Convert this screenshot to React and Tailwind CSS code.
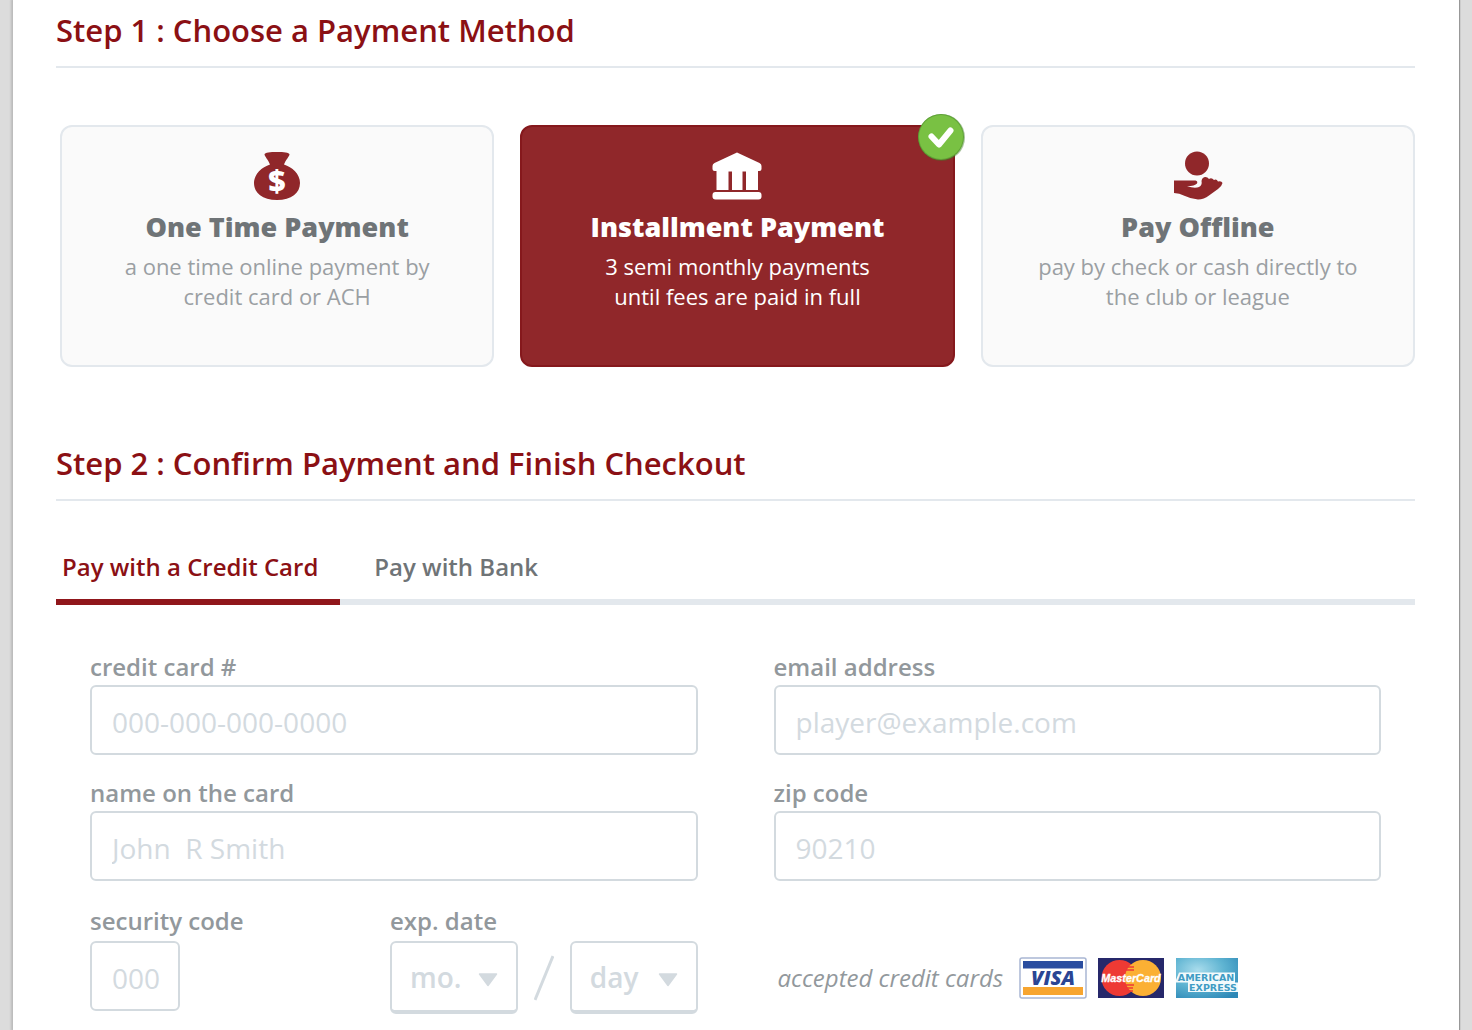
import { useState } from "react";

function MoneyBagIcon() {
  return (
    <svg viewBox="0 0 50 50" className="h-[50px] w-[50px]" aria-hidden="true">
      <path
        d="M12.5 3.2C13 1.6 18 1 25 1s12 .6 12.500 2.200C37.700 5 33.500 9 32 13.500c8 2.500 16 9.500 16 18.500 0 10-8.500 17-23 17S2 42 2 32c0-9 8-16 16-18.500C16.500 9 12.300 5 12.500 3.200Z"
        fill="#90272a"
      />
      <text x="25" y="41" textAnchor="middle" fontSize="30" className="fill-white font-['Open_Sans',sans-serif] font-extrabold">
        $
      </text>
    </svg>
  );
}

function BankIcon() {
  return (
    <svg viewBox="0 0 50 50" className="h-[50px] w-[50px]" fill="#fff" aria-hidden="true">
      <path d="M25 1.500 47.500 12Q49.500 13 49.500 15v3Q49.500 20 47.500 20H46V39H34V20.500H30.500V39H20V20.500H16.500V39H4.500V20H2.500Q.5 20 .5 18V15Q.5 13 2.500 12Z" />
      <rect x="0.500" y="41" width="49" height="7.500" rx="3" />
    </svg>
  );
}

function HandIcon() {
  return (
    <svg viewBox="0 0 50 50" className="h-[50px] w-[50px]" fill="#90272a" aria-hidden="true">
      <circle cx="24" cy="12.500" r="12" />
      <path d="M1 29.500H22.500Q25 30 24 32.500 22 35 14 35.300 22 37.800 26 36 29.500 34 28.500 30 29 26.500 32 26 34.500 25.800 36 28 38.500 26 41 29 43.500 27.500 45 30.500 48.500 29.500 49.500 32 49 35 45 38L36 44.500Q31 48.500 25 48.500 18 48 12 45 6 42 1 42Z" />
    </svg>
  );
}

function CheckBadge() {
  return (
    <svg viewBox="0 0 48 48" className="pointer-events-none absolute -top-3.5 -right-3 h-12 w-12" aria-hidden="true">
      <circle cx="24.500" cy="24.500" r="23.500" fill="#3d7a26" opacity="0.45" />
      <circle cx="24" cy="24" r="23" fill="#5fa336" />
      <circle cx="24" cy="24" r="22" fill="#79c143" />
      <path d="M14.500 23.500 22 31.500 33.500 17.500" fill="none" stroke="#fff" strokeWidth="6" strokeLinejoin="round" strokeLinecap="round" />
    </svg>
  );
}

function VisaLogo() {
  return (
    <svg viewBox="0 0 68 42" className="h-[42px] w-[68px]" role="img" aria-label="Visa">
      <rect x="1" y="1" width="66" height="40" rx="2" fill="#fff" stroke="#a9b6d3" strokeWidth="1.500" />
      <rect x="4" y="4" width="60" height="7.500" fill="#2a4da0" />
      <rect x="4" y="30" width="60" height="8" fill="#f7a530" />
      <text x="34" y="28" textAnchor="middle" fontSize="20" fill="#2a4594" className="font-['Open_Sans',sans-serif] font-extrabold italic">
        VISA
      </text>
    </svg>
  );
}

function MasterCardLogo() {
  return (
    <svg viewBox="0 0 68 42" className="h-[42px] w-[68px]" role="img" aria-label="MasterCard">
      <rect x="1" y="1" width="66" height="40" fill="#26286a" />
      <circle cx="22.500" cy="21" r="18" fill="#ee3a34" />
      <circle cx="46" cy="21" r="18" fill="#fbb034" />
      <path d="M29 10h8M28 13h9M28 28h9M29 31h7M32 34h4" stroke="#ee3a34" strokeWidth="1.500" />
      <g fontSize="10.800" textAnchor="middle" className="font-['Liberation_Sans',sans-serif] font-bold italic">
        <text x="34" y="25" fill="#fff" stroke="#fff" strokeWidth="0.300">MasterCard</text>
      </g>
    </svg>
  );
}

function AmexLogo() {
  return (
    <svg viewBox="0 0 64 42" className="h-[42px] w-16" role="img" aria-label="American Express">
      <defs>
        <radialGradient id="amex" cx="0.350" cy="0.300" r="0.850">
          <stop offset="0" stopColor="#a9dcec" />
          <stop offset="0.500" stopColor="#5fb4d2" />
          <stop offset="1" stopColor="#2c87b6" />
        </radialGradient>
      </defs>
      <rect x="1" y="1" width="62" height="40" fill="url(#amex)" />
      <path d="M4 15.500H60V25.500H63V35H13V25.500H1V23Z" fill="#f2fafc" />
      <g fill="#3f9cc4" fontSize="9.500" textAnchor="middle" className="font-['DejaVu_Sans',sans-serif] font-bold">
        <text x="31" y="24">AMERICAN</text>
        <text x="38" y="33.500">EXPRESS</text>
      </g>
    </svg>
  );
}

const methods = [
  { id: "once", title: "One Time Payment", lines: ["a one time online payment by", "credit card or ACH"], Icon: MoneyBagIcon },
  { id: "installment", title: "Installment Payment", lines: ["3 semi monthly payments", "until fees are paid in full"], Icon: BankIcon },
  { id: "offline", title: "Pay Offline", lines: ["pay by check or cash directly to", "the club or league"], Icon: HandIcon },
];

function StepHeading({ children }) {
  return (
    <h2 className="border-b-2 border-[#e3e8ed] pb-4 text-[31px] leading-10 font-semibold text-[#8b1014]">{children}</h2>
  );
}

function MethodCard({ method, selected, onSelect }) {
  const { title, lines, Icon } = method;
  return (
    <button
      type="button"
      role="radio"
      aria-checked={selected}
      onClick={onSelect}
      className={
        "relative flex flex-col items-center rounded-xl border-2 px-4 pt-6 pb-[54px] text-center " +
        (selected ? "border-[#85181c] bg-[#90272a] text-white" : "border-[#e3e8ed] bg-[#fafafa] text-[#9a9fa3]")
      }
    >
      <Icon />
      <span className={"mt-1.5 text-[27px] leading-10 font-extrabold " + (selected ? "text-white" : "text-[#6f7477]")}>{title}</span>
      <span className="mt-1 text-[22px] leading-[30px]">
        {lines[0]}
        <br />
        {lines[1]}
      </span>
      {selected && <CheckBadge />}
    </button>
  );
}

function Field({ id, label, roomy, ...props }) {
  return (
    <div className="flex flex-col">
      <label htmlFor={id} className={"text-2xl font-semibold text-[#92989c] " + (roomy ? "leading-10" : "leading-9")}>{label}</label>
      <input
        id={id}
        className="h-[70px] w-full rounded-md border-2 border-[#d3dadf] bg-white pr-4 pl-5 pt-1 text-[28px] text-[#6f7477] outline-none placeholder:text-[#d3dadf]"
        {...props}
      />
    </div>
  );
}

function DateSelect({ label, text, count }) {
  return (
    <div className="relative flex-1">
      <select
        aria-label={label}
        defaultValue=""
        className="block h-[73px] w-full appearance-none rounded-md border-2 border-b-4 border-[#d3dadf] bg-white px-[18px] text-[28px] font-semibold text-[#d3dadf] outline-none"
      >
        <option value="">{text}</option>
        {Array.from({ length: count }, (_, i) => (
          <option key={i} value={i + 1}>{i + 1}</option>
        ))}
      </select>
      <svg viewBox="0 0 20 14" className="pointer-events-none absolute top-8 right-5 h-[14px] w-5" aria-hidden="true">
        <path d="M1.500 1h17L10 12.500Z" fill="#d3dadf" stroke="#d3dadf" strokeWidth="1.500" strokeLinejoin="round" />
      </svg>
    </div>
  );
}

export default function App() {
  const [method, setMethod] = useState("installment");
  const [tab, setTab] = useState("card");
  const tabs = [
    { id: "card", label: "Pay with a Credit Card" },
    { id: "bank", label: "Pay with Bank" },
  ];

  return (
    <div className="min-h-screen bg-[#dcdcdc] pr-[13px] pl-[13px] font-['Open_Sans',sans-serif]">
      <main className="min-h-screen bg-white pr-11 pl-[43px] pt-[10px] pb-4 shadow-[-1px_0_2px_1px_#bbbbbb,1px_0_1px_0_#888888]">
        <section>
          <StepHeading>Step 1 : Choose a Payment Method</StepHeading>
          <div role="radiogroup" aria-label="Payment method" className="mt-[57px] grid grid-cols-3 gap-[26px] pl-1">
            {methods.map((m) => (
              <MethodCard key={m.id} method={m} selected={m.id === method} onSelect={() => setMethod(m.id)} />
            ))}
          </div>
        </section>

        <section className="mt-19">
          <StepHeading>Step 2 : Confirm Payment and Finish Checkout</StepHeading>
          <div role="tablist" className="mt-[42px] flex border-b-6 border-[#e3e8ed]">
            {tabs.map((t) => (
              <button
                key={t.id}
                type="button"
                role="tab"
                aria-selected={t.id === tab}
                onClick={() => setTab(t.id)}
                className={
                  "-mb-[6px] border-b-6 pt-1 pb-3 text-2xl leading-10 font-semibold " +
                  (t.id === tab ? "border-[#90161b] pr-[22px] pl-[6px] text-[#8b1014]" : "border-transparent px-[34px] text-[#6f7477]")
                }
              >
                {t.label}
              </button>
            ))}
          </div>

          <form className="mt-11 grid grid-cols-2 gap-x-[76px] gap-y-5 px-[34px]">
            <Field id="card-number" label="credit card #" placeholder="000-000-000-0000" />
            <Field id="email" label="email address" type="email" placeholder="player@example.com" />
            <Field id="card-name" label="name on the card" placeholder="John  R Smith" />
            <Field id="zip" label="zip code" placeholder="90210" />
            <div className="grid grid-cols-[300px_1fr]">
              <div className="w-[90px] whitespace-nowrap">
                <Field id="cvc" label="security code" placeholder="000" roomy />
              </div>
              <fieldset>
                <legend className="text-2xl leading-10 font-semibold text-[#92989c]">exp. date</legend>
                <div className="flex items-center gap-4">
                  <DateSelect label="Expiration month" text="mo." count={12} />
                  <svg viewBox="0 0 20 46" className="h-[46px] w-5" aria-hidden="true">
                    <path d="M1 45 19 1" stroke="#d3dadf" strokeWidth="3" />
                  </svg>
                  <DateSelect label="Expiration day" text="day" count={31} />
                </div>
              </fieldset>
            </div>
            <div className="flex items-center pt-10 pl-1">
              <span className="mr-4 text-2xl text-[#92989c] italic">accepted credit cards</span>
              <div className="flex gap-[10px]">
                <VisaLogo />
                <MasterCardLogo />
                <AmexLogo />
              </div>
            </div>
          </form>
        </section>
      </main>
    </div>
  );
}
